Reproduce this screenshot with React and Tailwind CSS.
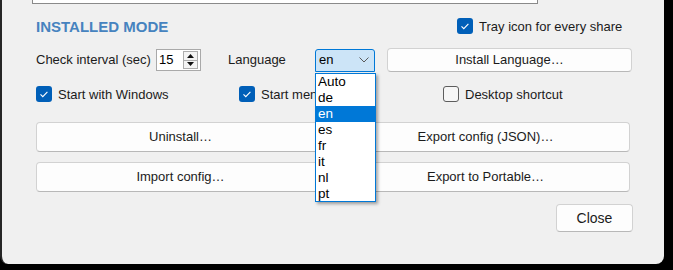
import React from 'react'

const FONT = { fontFamily: '"Liberation Sans", Arial, sans-serif' }

const LANGS = ['Auto', 'de', 'en', 'es', 'fr', 'it', 'nl', 'pt']

function Check({ checked, label, className = '', labelClass = '' }) {
  return (
    <div className={`flex items-center h-[16px] ${className}`}>
      {checked ? (
        <span className="w-[16px] h-[16px] rounded-[3px] bg-[#005fb8] flex items-center justify-center shrink-0">
          <svg width="16" height="16" viewBox="0 0 16 16">
            <polyline points="4.5,8.3 6.8,10.6 11.4,5.8" fill="none" stroke="#fff" strokeWidth="1.1" />
          </svg>
        </span>
      ) : (
        <span className="w-[16px] h-[16px] rounded-[3px] border border-[#5d5d5d] bg-[#f6f6f6] shrink-0" />
      )}
      <span className={`ml-[6px] text-[13px] text-[#1b1b1b] whitespace-nowrap leading-none ${labelClass}`}>{label}</span>
    </div>
  )
}

function Btn({ children, className = '' }) {
  return (
    <div
      className={`flex items-center justify-center bg-[#fdfdfd] border border-[#d2d2d2] border-b-[#b8b8b8] rounded-[4px] text-[13px] text-[#1b1b1b] ${className}`}
    >
      {children}
    </div>
  )
}

export default function App() {
  return (
    <div className="relative w-[673px] h-[270px] bg-black overflow-hidden" style={FONT}>
      <div className="w-[664px] h-[264px] bg-[#f0f0f0] border-l-2 border-[#262626] rounded-b-[8px] flex flex-col">
        {/* top box */}
        <div className="ml-[30px] w-[506px] h-[4px] bg-white border-x border-b border-[#8a8a8a]" />

        {/* heading row */}
        <div className="mt-[12px] h-[20px] flex items-center pl-[34px]">
          <div className="w-[421px] text-[15px] font-bold text-[#4683bf] leading-none">INSTALLED MODE</div>
          <Check checked label="Tray icon for every share" />
        </div>

        {/* interval / language row */}
        <div className="mt-[12px] h-[24px] flex items-center pl-[34px]">
          <div className="w-[120px] text-[13px] text-[#1b1b1b] whitespace-nowrap">Check interval (sec)</div>
          <div className="w-[45px] h-[22px] bg-white border border-[#a9a9a9] flex items-center">
            <span className="ml-[2px] text-[13px] text-black flex-1">15</span>
            <div className="w-[15px] h-[18px] mr-[2px] border border-[#adadad] flex flex-col">
              <div className="flex-1 flex items-center justify-center border-b border-[#adadad] bg-[#f4f4f4]">
                <svg width="7" height="4" viewBox="0 0 7 4"><polygon points="0,4 7,4 3.5,0" fill="#111" /></svg>
              </div>
              <div className="flex-1 flex items-center justify-center bg-[#f4f4f4]">
                <svg width="7" height="4" viewBox="0 0 7 4"><polygon points="0,0 7,0 3.5,4" fill="#111" /></svg>
              </div>
            </div>
          </div>
          <div className="ml-[27px] w-[87px] text-[13px] text-[#1b1b1b]">Language</div>
          <div className="w-[60px] h-[23px] bg-[#cce4f7] border border-[#0078d7] rounded-t-[3px] flex items-center justify-between pl-[3px] pr-[5px]">
            <span className="text-[13px] text-black">en</span>
            <svg width="10" height="6" viewBox="0 0 10 6">
              <polyline points="0.5,0.5 5,5 9.5,0.5" fill="none" stroke="#5a5a5a" strokeWidth="1" />
            </svg>
          </div>
          <Btn className="ml-[12px] w-[245px] h-[24px]">Install Language…</Btn>
        </div>

        {/* startup options */}
        <div className="mt-[14px] flex pl-[34px]">
          <Check checked label="Start with Windows" className="w-[203px]" />
          <Check checked label="Start menu shortcut" className="w-[204px]" labelClass="max-w-[54px] overflow-hidden" />
          <Check label="Desktop shortcut" />
        </div>

        {/* action buttons */}
        <div className="mt-[20px] flex gap-[16px] pl-[34px]">
          <Btn className="w-[289px] h-[30px]">Uninstall…</Btn>
          <Btn className="w-[289px] h-[30px]">Export config (JSON)…</Btn>
        </div>
        <div className="mt-[10px] flex gap-[16px] pl-[34px]">
          <Btn className="w-[289px] h-[30px]">Import config…</Btn>
          <Btn className="w-[289px] h-[30px]">Export to Portable…</Btn>
        </div>

        <div className="mt-[12px] flex justify-end pr-[31px]">
          <Btn className="w-[77px] h-[28px] text-[14px]">Close</Btn>
        </div>
      </div>

      {/* open language dropdown */}
      <div className="absolute left-[315px] top-[73px] w-[61px] h-[129px] bg-white border border-[#0078d7] shadow-[2px_2px_3px_rgba(0,0,0,0.35)]">
        {LANGS.map((l) => (
          <div
            key={l}
            className={`h-[16px] pl-[2px] text-[13.5px] leading-[16px] ${
              l === 'en' ? 'bg-[#0078d7] text-white' : 'text-black'
            }`}
            style={{ fontFamily: 'Arial, "Liberation Sans", sans-serif' }}
          >
            {l}
          </div>
        ))}
      </div>
    </div>
  )
}
